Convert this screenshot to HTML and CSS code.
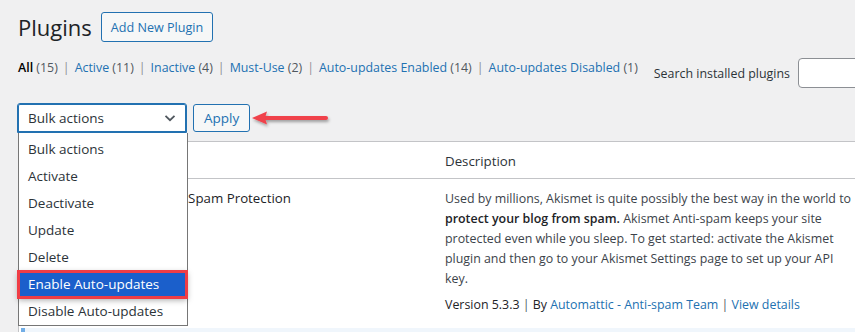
FILE: index.html
```html
<!DOCTYPE html>
<html>
<head>
<meta charset="utf-8">
<link rel="stylesheet" href="styles.css">
</head>
<body>
<div class="wrap">
  <div class="head">
    <h1 class="title">Plugins</h1>
    <a class="add-btn">Add New Plugin</a>
  </div>
  <div class="filters">
    <ul class="subsubsub">
      <li><span class="cur">All</span> <span class="count">(15)</span></li>
      <li class="sep">|</li>
      <li><a>Active <span class="count">(11)</span></a></li>
      <li class="sep">|</li>
      <li><a>Inactive <span class="count">(4)</span></a></li>
      <li class="sep">|</li>
      <li><a>Must-Use <span class="count">(2)</span></a></li>
      <li class="sep">|</li>
      <li><a>Auto-updates Enabled <span class="count">(14)</span></a></li>
      <li class="sep">|</li>
      <li><a>Auto-updates Disabled <span class="count">(1)</span></a></li>
    </ul>
    <div class="search">
      <label class="search-label">Search installed plugins</label>
      <span class="search-input"></span>
    </div>
  </div>
  <div class="tablenav">
    <div class="select">
      <span>Bulk actions</span>
      <svg class="chev" width="14" height="14" viewBox="0 0 14 14"><path d="M2.5 4.8 L7 9.2 L11.5 4.8" fill="none" stroke="#50575e" stroke-width="1.8"/></svg>
    </div>
    <a class="apply">Apply</a>
    <svg class="arrow" width="90" height="24" viewBox="0 0 90 24">
      <defs>
        <filter id="sh" x="-20%" y="-60%" width="140%" height="240%">
          <feDropShadow dx="1" dy="2" stdDeviation="1.6" flood-color="#000" flood-opacity="0.35"/>
        </filter>
      </defs>
      <g filter="url(#sh)">
        <path d="M14 12 L76 12" stroke="#f0424b" stroke-width="4" stroke-linecap="round"/>
        <path d="M2 12 L17 5.5 L15 12 L17 18.5 Z" fill="#f0424b"/>
      </g>
    </svg>
  </div>
  <div class="table">
    <div class="thead">
      <div class="col-cb"></div>
      <div class="col-name"></div>
      <div class="col-desc">Description</div>
    </div>
    <div class="row">
      <div class="col-cb"></div>
      <div class="col-name"><span class="pname">Akismet Anti-spam: Spam Protection</span></div>
      <div class="col-desc">
        <p class="desc">Used by millions, Akismet is quite possibly the best way in the world to <strong>protect your blog from spam.</strong> Akismet Anti-spam keeps your site protected even while you sleep. To get started: activate the Akismet plugin and then go to your Akismet Settings page to set up your API key.</p>
        <p class="meta">Version 5.3.3 <span class="bar">|</span> By <a>Automattic - Anti-spam Team</a> <span class="bar">|</span> <a>View details</a></p>
      </div>
    </div>
    <div class="row-next"></div>
  </div>
</div>
<ul class="dropdown">
  <li>Bulk actions</li>
  <li>Activate</li>
  <li>Deactivate</li>
  <li>Update</li>
  <li>Delete</li>
  <li class="hl">Enable Auto-updates</li>
  <li>Disable Auto-updates</li>
</ul>
</body>
</html>
```

FILE: styles.css
```css
* { box-sizing: border-box; }
html, body { margin: 0; padding: 0; }
body {
  background: #f0f0f1;
  font-family: "Segoe UI", "Open Sans", "Noto Sans", sans-serif;
  font-size: 12.4px;
  color: #3c434a;
  width: 855px;
  height: 332px;
  overflow: hidden;
  position: relative;
}
a { color: #2271b1; text-decoration: none; }
.wrap { padding-left: 18px; }
.head {
  display: flex;
  align-items: center;
  gap: 9px;
  padding-top: 12px;
}
.title {
  margin: 0;
  font-size: 22px;
  font-weight: 400;
  color: #1d2327;
  line-height: 29px;
}
.add-btn {
  display: inline-flex;
  align-items: center;
  height: 30px;
  padding: 0 9px;
  border: 1px solid #2271b1;
  border-radius: 3px;
  background: #f6f7f7;
  color: #2271b1;
  font-size: 12.6px;
}
.filters {
  display: flex;
  align-items: center;
  margin-top: 16px;
}
.subsubsub {
  list-style: none;
  margin: 0;
  padding: 0;
  display: flex;
  gap: 5px;
  white-space: nowrap;
  margin-top: -11px;
}
.subsubsub .cur { color: #000; font-weight: 600; }
.count { color: #50575e; }
.sep { color: #8c8f94; }
.search {
  display: flex;
  align-items: center;
  gap: 8px;
  margin-left: 16px;
  white-space: nowrap;
}
.search-label { color: #2c3338; }
.search-input {
  display: block;
  width: 120px;
  height: 30px;
  border: 1px solid #8c8f94;
  border-radius: 4px;
  background: #fff;
}
.tablenav {
  display: flex;
  align-items: center;
  gap: 6px;
  margin-top: 15px;
  height: 30px;
  position: relative;
}
.select {
  width: 170px;
  height: 30px;
  margin-left: -1px;
  border: 1px solid #2271b1;
  box-shadow: 0 0 0 1px #2271b1 inset;
  border-radius: 3px 3px 0 0;
  background: #fff;
  display: flex;
  align-items: center;
  justify-content: space-between;
  padding: 0 9px 0 10px;
  color: #2c3338;
  font-size: 13.5px;
}
.chev { display: block; }
.apply {
  display: inline-flex;
  align-items: center;
  height: 28px;
  padding: 0 10px;
  border: 1px solid #2271b1;
  border-radius: 3px;
  background: #f6f7f7;
  font-size: 13.5px;
}
.arrow {
  position: absolute;
  left: 232px;
  top: 3px;
}
.table {
  margin-top: 8px;
  width: 860px;
  background: #fff;
  border-top: 1px solid #c3c4c7;
  border-left: 1px solid #c3c4c7;
}
.thead, .row {
  display: flex;
}
.thead {
  height: 37px;
  align-items: center;
  border-bottom: 1px solid #c3c4c7;
  color: #2c3338;
  font-size: 13.3px;
}
.col-cb { width: 40px; flex: none; }
.col-name { width: 386px; flex: none; }
.col-desc { width: 412px; flex: none; }
.thead .col-desc { padding-top: 1px; }
.row { height: 149px; padding-top: 10px; }
.row .col-name { padding-left: 6px; }
.pname {
  display: block;
  font-size: 13.3px;
  color: #1d2327;
  white-space: nowrap;
}
.desc {
  margin: 0;
  line-height: 20px;
  color: #3c434a;
}
.desc strong { color: #1d2327; font-weight: 600; }
.meta {
  margin: 7px 0 0;
  color: #1d2327;
}
.bar { color: #50575e; }
.row-next {
  height: 12px;
  background: #f0f6fc;
  border-left: 4px solid #72aee6;
  margin-left: 2px;
}
.dropdown {
  position: absolute;
  left: 18px;
  top: 133px;
  width: 170px;
  margin: 0;
  padding: 3px 0 0;
  list-style: none;
  background: #fff;
  border: 1px solid #767676;
  border-top: none;
  font-size: 13.5px;
  color: #2c3338;
}
.dropdown li {
  height: 27px;
  line-height: 27px;
  padding-left: 9px;
  white-space: nowrap;
}
.dropdown li.hl {
  background: #1b5fcb;
  color: #fff;
  position: relative;
  margin-left: -1px;
  padding-left: 10px;
  outline: 3px solid #f03d45;
  outline-offset: -2px;
  box-shadow: 0 2px 6px rgba(0,0,0,0.35);
}
```
